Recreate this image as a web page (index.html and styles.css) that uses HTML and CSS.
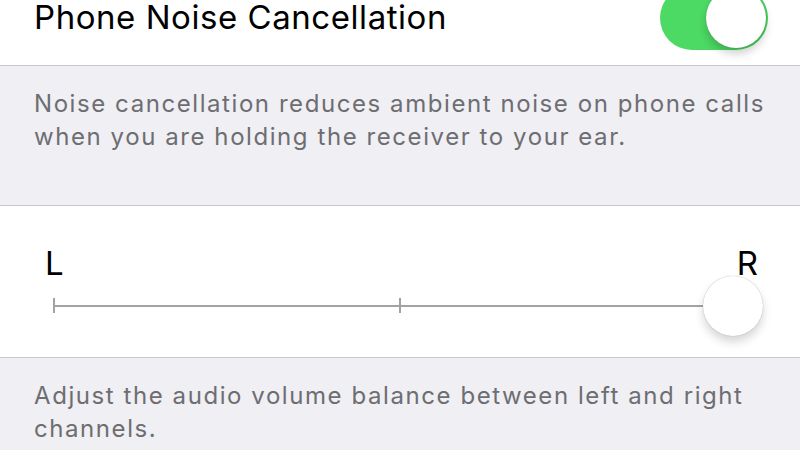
FILE: index.html
```
<!DOCTYPE html>
<html>
<head>
<meta charset="utf-8">
<link rel="stylesheet" href="styles.css">
</head>
<body>
<div class="screen">
  <section class="cell top-cell">
    <div class="cell-title">Phone Noise Cancellation</div>
    <div class="switch on"><div class="switch-knob"></div></div>
  </section>
  <div class="footer footer-noise">Noise cancellation reduces ambient noise on phone calls<br>when you are holding the receiver to your ear.</div>
  <section class="cell balance-cell">
    <div class="balance-labels"><span>L</span><span>R</span></div>
    <div class="slider">
      <div class="slider-track">
        <span class="tick tick-left"></span>
        <span class="tick tick-mid"></span>
      </div>
      <div class="slider-knob"></div>
    </div>
  </section>
  <div class="footer footer-balance">Adjust the audio volume balance between left and right<br>channels.</div>
</div>
</body>
</html>
```
FILE: styles.css
```
html, body {
  margin: 0;
  padding: 0;
}
body {
  background: #efeff4;
  font-family: Inter, "Liberation Sans", Arial, sans-serif;
  width: 800px;
  height: 450px;
  overflow: hidden;
}
.screen {
  display: flex;
  flex-direction: column;
}
.cell {
  background: #ffffff;
}
.top-cell {
  height: 65px;
  border-bottom: 1px solid #c8c7cc;
  display: flex;
  align-items: flex-start;
  justify-content: space-between;
  padding: 0 32px 0 34px;
}
.cell-title {
  font-size: 33px;
  line-height: 34px;
  letter-spacing: 0.55px;
  color: #000;
}
.switch {
  width: 108px;
  height: 64px;
  border-radius: 32px;
  background: linear-gradient(90deg, #4cd964 0%, #4cd964 60%, #45d35c 100%);
  margin-top: -14px;
  position: relative;
}
.switch-knob {
  position: absolute;
  right: 2px;
  top: 2px;
  width: 60px;
  height: 60px;
  border-radius: 50%;
  background: #fff;
  box-shadow: 0 6px 8px rgba(0,0,0,0.18), 0 0 1px rgba(0,0,0,0.25);
}
.footer {
  color: #6d6d72;
  font-size: 24px;
  line-height: 33px;
  letter-spacing: 1.57px;
  padding: 0 20px 0 34px;
  white-space: nowrap;
}
.footer-noise {
  height: 140px;
  box-sizing: border-box;
  padding-top: 21px;
  border-bottom: 1px solid #c8c7cc;
}
.balance-cell {
  height: 151px;
  border-bottom: 1px solid #c8c7cc;
  padding: 0 42px 0 45px;
  display: flex;
  flex-direction: column;
}
.balance-labels {
  display: flex;
  justify-content: space-between;
  font-size: 33px;
  line-height: 36px;
  margin-top: 39px;
  color: #000;
}
.slider {
  position: relative;
  height: 60px;
  margin-top: -5px;
  margin-left: 8px;
}
.slider-track {
  position: absolute;
  left: 0;
  right: 30px;
  top: 29px;
  height: 2px;
  background: #a3a3a3;
}
.tick {
  position: absolute;
  top: -7px;
  width: 2px;
  height: 15px;
  background: #a3a3a3;
}
.tick-left { left: 0; }
.tick-mid { left: 346px; }
.slider-knob {
  position: absolute;
  right: -5px;
  top: 0;
  width: 60px;
  height: 60px;
  border-radius: 50%;
  background: #fff;
  box-shadow: 0 6px 10px rgba(0,0,0,0.16), 0 0 1px rgba(0,0,0,0.35);
}
.footer-balance {
  padding-top: 21px;
}
```
